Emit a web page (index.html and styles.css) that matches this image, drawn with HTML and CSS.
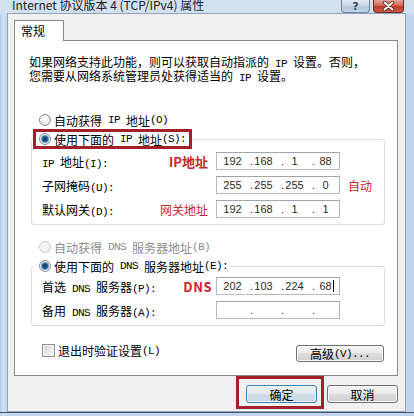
FILE: index.html
```html
<!DOCTYPE html>
<html>
<head>
  <meta charset="utf-8">
  <link rel="stylesheet" href="styles.css">
</head>
<body>
  <div class="window">
    <div class="titlebar">
      <span class="title">Internet 协议版本 4 (TCP/IPv4) 属性</span>
      <span class="cap-btn help">?</span>
      <span class="cap-btn close">
        <svg width="13" height="10" viewBox="0 0 13 10">
          <path d="M2.5 1.5 L10.5 8.5 M10.5 1.5 L2.5 8.5" stroke="#5a1a14" stroke-width="3.6" stroke-linecap="round"/>
          <path d="M2.5 1.5 L10.5 8.5 M10.5 1.5 L2.5 8.5" stroke="#fff" stroke-width="2" stroke-linecap="round"/>
        </svg>
      </span>
    </div>

    <div class="client">
      <div class="tabs">
        <div class="tab">常规</div>
      </div>

      <div class="panel">
        <p class="intro">如果网络支持此功能，则可以获取自动指派的<span class="en"> IP </span>设置。否则，<br>您需要从网络系统管理员处获得适当的<span class="en"> IP </span>设置。</p>

        <div class="option first"><span class="radio"></span>自动获得<span class="en"> IP </span>地址<span class="en">(O)</span></div>

        <fieldset class="group ip-group">
          <legend><span class="option mark"><span class="radio on"></span>使用下面的<span class="en"> IP </span>地址<span class="en">(S):</span></span></legend>
          <div class="row">
            <div class="lead"><span><span class="en">IP </span>地址<span class="en">(I):</span></span><span class="note strong">IP地址</span></div>
            <div class="ip">
              <span class="seg"><span class="dot"></span><span class="num">192</span></span>
              <span class="seg"><span class="dot">.</span><span class="num">168</span></span>
              <span class="seg"><span class="dot">.</span><span class="num">1</span></span>
              <span class="seg"><span class="dot">.</span><span class="num">88</span></span>
            </div>
          </div>
          <div class="row">
            <div class="lead"><span>子网掩码<span class="en">(U):</span></span></div>
            <div class="ip">
              <span class="seg"><span class="dot"></span><span class="num">255</span></span>
              <span class="seg"><span class="dot">.</span><span class="num">255</span></span>
              <span class="seg"><span class="dot">.</span><span class="num">255</span></span>
              <span class="seg"><span class="dot">.</span><span class="num">0</span></span>
            </div>
            <span class="note side">自动</span>
          </div>
          <div class="row">
            <div class="lead"><span>默认网关<span class="en">(D):</span></span><span class="note">网关地址</span></div>
            <div class="ip">
              <span class="seg"><span class="dot"></span><span class="num">192</span></span>
              <span class="seg"><span class="dot">.</span><span class="num">168</span></span>
              <span class="seg"><span class="dot">.</span><span class="num">1</span></span>
              <span class="seg"><span class="dot">.</span><span class="num">1</span></span>
            </div>
          </div>
        </fieldset>

        <div class="option disabled"><span class="radio off"></span>自动获得<span class="en"> DNS </span>服务器地址<span class="en">(B)</span></div>

        <fieldset class="group dns-group">
          <legend><span class="option plain"><span class="radio on"></span>使用下面的<span class="en"> DNS </span>服务器地址<span class="en">(E):</span></span></legend>
          <div class="row">
            <div class="lead"><span>首选<span class="en"> DNS </span>服务器<span class="en">(P):</span></span><span class="note strong dns">DNS</span></div>
            <div class="ip">
              <span class="seg"><span class="dot"></span><span class="num">202</span></span>
              <span class="seg"><span class="dot">.</span><span class="num">103</span></span>
              <span class="seg"><span class="dot">.</span><span class="num">224</span></span>
              <span class="seg"><span class="dot">.</span><span class="num">68<span class="caret"></span></span></span>
            </div>
          </div>
          <div class="row">
            <div class="lead"><span>备用<span class="en"> DNS </span>服务器<span class="en">(A):</span></span></div>
            <div class="ip">
              <span class="seg"><span class="dot"></span><span class="num"></span></span>
              <span class="seg"><span class="dot">.</span><span class="num"></span></span>
              <span class="seg"><span class="dot">.</span><span class="num"></span></span>
              <span class="seg"><span class="dot">.</span><span class="num"></span></span>
            </div>
          </div>
        </fieldset>

        <div class="panel-foot">
          <label class="check"><span class="box"></span>退出时验证设置<span class="en">(L)</span></label>
          <span class="btn advanced">高级<span class="en">(V)...</span></span>
        </div>
      </div>

      <div class="footer">
        <span class="mark-box"><span class="btn default">确定</span></span>
        <span class="btn cancel">取消</span>
      </div>
    </div>
  </div>
</body>
</html>
```

FILE: styles.css
```css
* {
  box-sizing: border-box;
}
body {
  margin: 0;
  font-family: "Noto Sans CJK SC", "Liberation Sans", sans-serif;
  font-size: 12px;
  color: #000;
}

/* half-width latin, like the dialog's system font */
.en {
  font-family: "Liberation Mono", monospace;
  font-size: 11px;
  letter-spacing: -0.6px;
  white-space: pre;
}

/* window frame */
.window {
  width: 414px;
  height: 416px;
  padding: 0 9px 9px 8px;
  overflow: hidden;
  background:
    linear-gradient(#3f536a, #3f536a) no-repeat 0 412px / 100% 1px,
    linear-gradient(to right, #b3cbe6, #cfe0f2 3px, #c1d6ec 7px, #c1d6ec);
}
.titlebar {
  height: 14px;
  display: flex;
  align-items: flex-start;
  background: #d3e1ef;
  margin: 0 -9px 0 -8px;
  padding: 0 10px 0 0;
}
.title {
  flex: 1;
  padding-left: 12px;
  line-height: 10px;
  font-size: 12px;
  color: #1b1b1b;
  white-space: nowrap;
}
.cap-btn {
  height: 13px;
  display: flex;
  align-items: center;
  justify-content: center;
  border: 1px solid #71839a;
  border-top: none;
  border-radius: 0 0 4px 4px;
}
.help {
  width: 29px;
  background: linear-gradient(#e2ebf4, #c6d4e4 50%, #b3c5da 50%, #c2d3e6);
  color: #34475e;
  font: bold 11px "DejaVu Sans", sans-serif;
}
.close {
  width: 31px;
  margin-left: 3px;
  border-color: #6d2a24;
  background: linear-gradient(#e6a59a, #d06050 50%, #bd3a29 50%, #cd5a43);
}

/* client area */
.client {
  background: #f0f0f0;
  padding: 6px 7px 2px 6px;
  box-shadow: 0 0 0 1px #8ea4bd;
}
.tabs {
  display: flex;
}
.tab {
  position: relative;
  width: 50px;
  height: 21px;
  margin-bottom: -1px;
  padding-left: 6px;
  line-height: 19px;
  background: #fff;
  border: 1px solid #898c95;
  border-bottom: none;
}
.panel {
  background: #fff;
  border: 1px solid #898c95;
  padding: 15px 13px 13px 14px;
}
.intro {
  margin: 0;
  line-height: 12px;
}

/* radios */
.option {
  display: flex;
  align-items: center;
  height: 16px;
  white-space: nowrap;
}
.option .radio {
  margin-right: 3px;
}
.option.first {
  margin: 28px 0 0 10px;
}
.option.disabled {
  margin: 14px 0 0 10px;
  color: #8d8d8d;
}
.radio {
  flex: none;
  width: 12px;
  height: 12px;
  border-radius: 50%;
  border: 1px solid #8a8e94;
  background: radial-gradient(circle at 40% 35%, #fff, #ececec 55%, #cfd1d4);
}
.radio.on {
  background: radial-gradient(circle, #123f6b 0 1.5px, #3c78b0 3px, #9cc0e2 4px, #f3f3f3 4.6px, #dcdcdc);
}
.radio.off {
  border-color: #c8cacd;
  background: #f4f4f4;
}

/* group boxes */
.group {
  margin: 1px -1px 0 2px;
  padding: 0 0 3px 10px;
  border: 1px solid #d5dfe5;
  border-radius: 3px;
  min-width: 0;
}
.group legend {
  padding: 0;
  margin-left: -9px;
}
.dns-group {
  margin-top: 3px;
}
.option.mark {
  height: 20px;
  padding: 0 3px;
  border: 3px solid #a3202b;
}
.option.plain {
  padding-left: 6px;
  padding-right: 2px;
}
.row {
  display: flex;
  align-items: center;
  height: 24px;
}
.lead {
  width: 174px;
  display: flex;
  justify-content: space-between;
  align-items: center;
  padding-right: 8px;
  white-space: nowrap;
}
.note {
  color: #c9252c;
  font-size: 12px;
}
.note.strong {
  font-weight: bold;
  font-size: 13px;
}
.note.dns {
  margin-right: -4px;
  letter-spacing: 0.5px;
}
.note.side {
  margin-left: 8px;
}

/* ip address field */
.ip {
  width: 124px;
  height: 18px;
  display: flex;
  align-items: center;
  padding-left: 2px;
  background: #fff;
  border: 1px solid #b5b8be;
  border-top-color: #a2a5ab;
  font: 11px "Liberation Sans", sans-serif;
  color: #2b2b2b;
}
.seg {
  flex: none;
  width: 31px;
  display: flex;
}
.dot {
  width: 4px;
}
.num {
  width: 19px;
  text-align: center;
  white-space: nowrap;
}
.caret {
  display: inline-block;
  width: 1px;
  height: 12px;
  margin-left: 1px;
  margin-right: -2px;
  vertical-align: -2px;
  background: #000;
}

/* bottom of panel */
.panel-foot {
  display: flex;
  justify-content: space-between;
  align-items: flex-start;
  margin-top: 18px;
  padding-left: 13px;
}
.check {
  display: flex;
  align-items: center;
  height: 13px;
}
.box {
  width: 13px;
  height: 13px;
  margin-right: 3px;
  border: 1px solid #8e8f8f;
  background: linear-gradient(135deg, #d5d5d5, #f7f7f7);
  box-shadow: inset 0 0 0 1px #f4f4f4;
}
.btn {
  display: flex;
  align-items: center;
  justify-content: center;
  width: 71px;
  height: 18px;
  border: 1px solid #707070;
  border-radius: 3px;
  background: linear-gradient(#f3f3f3, #ebebeb 50%, #dddddd 50%, #d0d0d0);
  box-shadow: inset 0 0 0 1px #fafafa;
}
.btn.advanced {
  width: 88px;
  height: 17px;
  margin-top: 1px;
}
.btn.default {
  border-color: #3c7fb1;
  background: linear-gradient(#eef3f7, #e1eaf0 50%, #d0dde6 50%, #cbd9e3);
  box-shadow: inset 0 0 0 1px #e9f4fb;
}

/* dialog buttons */
.footer {
  display: flex;
  justify-content: flex-end;
  align-items: flex-end;
}
.mark-box {
  padding: 6px 4px 3px 7px;
  border: 3px solid #a3202b;
}
.btn.cancel {
  margin: 0 0 6px 3px;
}
```
